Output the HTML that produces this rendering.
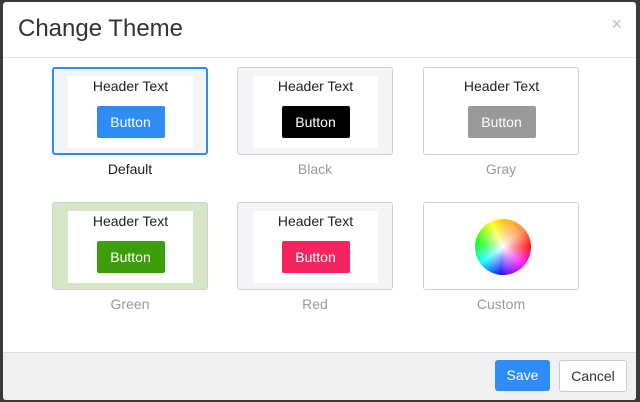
<!DOCTYPE html>
<html><head><style>
body{margin:0;width:640px;height:402px;background:#3a3a3a;font-family:"Liberation Sans",sans-serif;position:relative;overflow:hidden}
.m{position:absolute;left:3px;top:2px;width:633px;height:398px;background:#fff;border-radius:3px;overflow:hidden}
.t{position:absolute;left:15px;top:13px;font-size:24px;color:#333}
.x{position:absolute;right:14px;top:12px;font-size:18px;color:#bbb}
.hr{position:absolute;left:0;right:0;top:55px;border-top:1px solid #e5e5e5}
.c{position:absolute;width:154px;height:86px;border:1px solid #d0d0d0;border-radius:3px;background:#f3f4f8}
.c.sel{border:2px solid #2e8cf7;width:152px;height:84px}
.in{position:absolute;left:15px;top:8px;width:125px;height:72px;background:#fff;text-align:center}
.sel .in{left:14px;top:7px}
.h{font-size:14px;color:#222;margin-top:2px}
.b{display:inline-block;margin-top:12px;width:68px;height:32px;line-height:32px;border-radius:2px;color:#fff;font-size:14px}
.l{position:absolute;width:156px;text-align:center;font-size:14px;color:#999}
.f{position:absolute;left:0;right:0;top:350px;bottom:0;background:#f0f0f0;border-top:1px solid #ddd}
.btn{position:absolute;top:358px;height:31px;line-height:31px;border-radius:3px;font-size:14px;text-align:center}
</style></head><body>
<div class="m">
<div class="t">Change Theme</div><div class="x">×</div><div class="hr"></div>
<div class="c sel" style="left:49px;top:65px"><div class="in"><div class="h">Header Text</div><div class="b" style="background:#2e8cf7">Button</div></div></div>
<div class="l" style="left:49px;top:159px;color:#222">Default</div>
<div class="c" style="left:234px;top:65px"><div class="in"><div class="h">Header Text</div><div class="b" style="background:#000">Button</div></div></div>
<div class="l" style="left:234px;top:159px">Black</div>
<div class="c" style="left:420px;top:65px;background:#fff"><div class="in"><div class="h">Header Text</div><div class="b" style="background:#999">Button</div></div></div>
<div class="l" style="left:420px;top:159px">Gray</div>
<div class="c" style="left:49px;top:200px;background:#d5e7c8"><div class="in"><div class="h">Header Text</div><div class="b" style="background:#3d9e0b">Button</div></div></div>
<div class="l" style="left:49px;top:294px">Green</div>
<div class="c" style="left:234px;top:200px"><div class="in"><div class="h">Header Text</div><div class="b" style="background:#f5235e">Button</div></div></div>
<div class="l" style="left:234px;top:294px">Red</div>
<div class="c" style="left:420px;top:200px;background:#fff"><div style="position:absolute;left:51px;top:16px;width:56px;height:56px;border-radius:50%;background:radial-gradient(circle,#fff 0%,rgba(255,255,255,.6) 25%,rgba(255,255,255,0) 75%),conic-gradient(from 0deg,#ffc000,#ff8040 50deg,#f00 90deg,#f0f 130deg,#60f 170deg,#00f 185deg,#0ff 235deg,#0f0 280deg,#ff0 335deg,#ffc000)"></div></div>
<div class="l" style="left:420px;top:294px">Custom</div>
<div class="f"></div>
<div class="btn" style="left:492px;width:55px;background:#2e8cf7;color:#fff">Save</div>
<div class="btn" style="left:556px;width:66px;background:#fff;border:1px solid #ccc;color:#333;height:30px;line-height:30px">Cancel</div>
</div>
</body></html>
